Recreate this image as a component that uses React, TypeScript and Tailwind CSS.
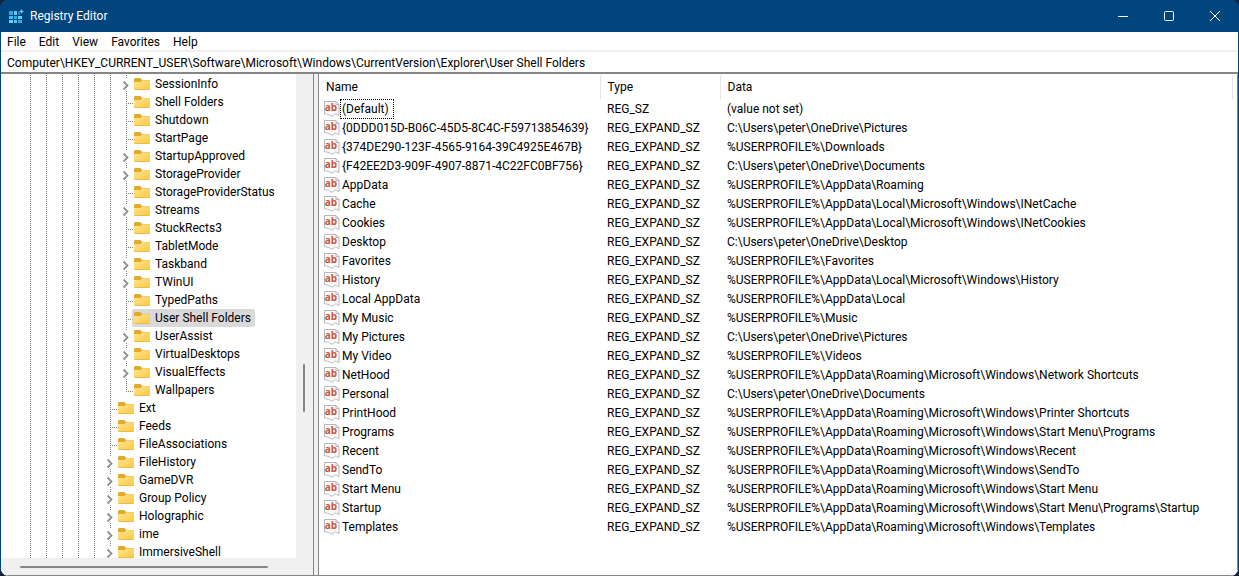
import React from 'react';

type Branch = 'closed' | 'leaf' | 'last';

interface TreeKey {
    name: string;
    depth: number;
    branch: Branch;
    selected?: boolean;
}

interface RegistryValue {
    name: string;
    data: string;
    type?: string;
    focused?: boolean;
}

const treeKeys: TreeKey[] = [
    { name: 'SessionInfo', depth: 6, branch: 'closed' },
    { name: 'Shell Folders', depth: 6, branch: 'leaf' },
    { name: 'Shutdown', depth: 6, branch: 'leaf' },
    { name: 'StartPage', depth: 6, branch: 'leaf' },
    { name: 'StartupApproved', depth: 6, branch: 'closed' },
    { name: 'StorageProvider', depth: 6, branch: 'closed' },
    { name: 'StorageProviderStatus', depth: 6, branch: 'leaf' },
    { name: 'Streams', depth: 6, branch: 'closed' },
    { name: 'StuckRects3', depth: 6, branch: 'leaf' },
    { name: 'TabletMode', depth: 6, branch: 'leaf' },
    { name: 'Taskband', depth: 6, branch: 'closed' },
    { name: 'TWinUI', depth: 6, branch: 'closed' },
    { name: 'TypedPaths', depth: 6, branch: 'leaf' },
    { name: 'User Shell Folders', depth: 6, branch: 'leaf', selected: true },
    { name: 'UserAssist', depth: 6, branch: 'closed' },
    { name: 'VirtualDesktops', depth: 6, branch: 'closed' },
    { name: 'VisualEffects', depth: 6, branch: 'closed' },
    { name: 'Wallpapers', depth: 6, branch: 'last' },
    { name: 'Ext', depth: 5, branch: 'leaf' },
    { name: 'Feeds', depth: 5, branch: 'leaf' },
    { name: 'FileAssociations', depth: 5, branch: 'leaf' },
    { name: 'FileHistory', depth: 5, branch: 'closed' },
    { name: 'GameDVR', depth: 5, branch: 'closed' },
    { name: 'Group Policy', depth: 5, branch: 'closed' },
    { name: 'Holographic', depth: 5, branch: 'closed' },
    { name: 'ime', depth: 5, branch: 'closed' },
    { name: 'ImmersiveShell', depth: 5, branch: 'closed' },
];

const values: RegistryValue[] = [
    { name: '(Default)', type: 'REG_SZ', data: '(value not set)', focused: true },
    { name: '{0DDD015D-B06C-45D5-8C4C-F59713854639}', data: 'C:\\Users\\peter\\OneDrive\\Pictures' },
    { name: '{374DE290-123F-4565-9164-39C4925E467B}', data: '%USERPROFILE%\\Downloads' },
    { name: '{F42EE2D3-909F-4907-8871-4C22FC0BF756}', data: 'C:\\Users\\peter\\OneDrive\\Documents' },
    { name: 'AppData', data: '%USERPROFILE%\\AppData\\Roaming' },
    { name: 'Cache', data: '%USERPROFILE%\\AppData\\Local\\Microsoft\\Windows\\INetCache' },
    { name: 'Cookies', data: '%USERPROFILE%\\AppData\\Local\\Microsoft\\Windows\\INetCookies' },
    { name: 'Desktop', data: 'C:\\Users\\peter\\OneDrive\\Desktop' },
    { name: 'Favorites', data: '%USERPROFILE%\\Favorites' },
    { name: 'History', data: '%USERPROFILE%\\AppData\\Local\\Microsoft\\Windows\\History' },
    { name: 'Local AppData', data: '%USERPROFILE%\\AppData\\Local' },
    { name: 'My Music', data: '%USERPROFILE%\\Music' },
    { name: 'My Pictures', data: 'C:\\Users\\peter\\OneDrive\\Pictures' },
    { name: 'My Video', data: '%USERPROFILE%\\Videos' },
    { name: 'NetHood', data: '%USERPROFILE%\\AppData\\Roaming\\Microsoft\\Windows\\Network Shortcuts' },
    { name: 'Personal', data: 'C:\\Users\\peter\\OneDrive\\Documents' },
    { name: 'PrintHood', data: '%USERPROFILE%\\AppData\\Roaming\\Microsoft\\Windows\\Printer Shortcuts' },
    { name: 'Programs', data: '%USERPROFILE%\\AppData\\Roaming\\Microsoft\\Windows\\Start Menu\\Programs' },
    { name: 'Recent', data: '%USERPROFILE%\\AppData\\Roaming\\Microsoft\\Windows\\Recent' },
    { name: 'SendTo', data: '%USERPROFILE%\\AppData\\Roaming\\Microsoft\\Windows\\SendTo' },
    { name: 'Start Menu', data: '%USERPROFILE%\\AppData\\Roaming\\Microsoft\\Windows\\Start Menu' },
    { name: 'Startup', data: '%USERPROFILE%\\AppData\\Roaming\\Microsoft\\Windows\\Start Menu\\Programs\\Startup' },
    { name: 'Templates', data: '%USERPROFILE%\\AppData\\Roaming\\Microsoft\\Windows\\Templates' },
];

const RegistryIcon = () => (
    <svg width="16" height="16" viewBox="0 0 16 16" aria-hidden="true">
        <path d="M1 3h4v4H1z" fill="#2fa8e0" />
        <path d="M6 3h3v4H6z" fill="#53cdf5" />
        <path d="M10 4h2v3h-2z" fill="#2386c0" />
        <path d="M1 8h4v3H1z" fill="#3fbdf0" />
        <path d="M6 8h3v3H6z" fill="#2fa8e0" />
        <path d="M10 8h4v3h-4z" fill="#58d4f8" />
        <path d="M1 12h4v3H1z" fill="#58d4f8" />
        <path d="M6 12h3v3H6z" fill="#4fc8f2" />
        <path d="M10 12h4v3h-4z" fill="#2fa8e0" />
        <path d="M13.500 1l.8 1.700 1.700.8-1.700.8-.8 1.700-.8-1.700-1.700-.8 1.700-.8z" fill="#5fd8fa" />
    </svg>
);

const FolderIcon = () => (
    <svg className="shrink-0" width="16" height="14" viewBox="0 0 16 14" aria-hidden="true">
        <defs>
            <linearGradient id="folder-front" x1="0" y1="0" x2="1" y2="1">
                <stop offset="0" stopColor="#ffe48f" />
                <stop offset="1" stopColor="#f9c941" />
            </linearGradient>
        </defs>
        <path d="M0 2.500C0 1.600.6 1 1.500 1h4.300c.5 0 .8.2 1.100.5L8.200 3H14.500c.9 0 1.500.6 1.500 1.500V7H0z" fill="#e0a92c" />
        <path d="M0 5h6.500L8.500 3.200h6c.9 0 1.500.5 1.500 1.300v7c0 .9-.6 1.500-1.500 1.500h-13C.6 13 0 12.400 0 11.500z" fill="url(#folder-front)" />
        <path d="M.5 12.500h15" stroke="#ecbc3f" />
    </svg>
);

// REG_SZ / REG_EXPAND_SZ marker: a torn sheet with "ab" on it
const StringIcon = () => (
    <svg className="shrink-0" width="16" height="17" viewBox="0 0 16 17" aria-hidden="true">
        <path
            d="M.5 1.500h11.500l3 3v11c-1.500 0-2-1.500-3.500-1.500s-2 2-3.500 2-2-1.500-3.500-1.500-2.500-1-4-.7z"
            fill="#fdfaf8"
            stroke="#b4b6ba"
        />
        <path d="M12 1.500v3h3" fill="none" stroke="#b4b6ba" />
        <text x="7" y="11" textAnchor="middle" fontSize="10" fontWeight="700" fontFamily="Open Sans, sans-serif" fill="#c9573a">ab</text>
    </svg>
);

const BranchMark = ({ branch }: { branch: Branch }) => (
    <svg className="shrink-0" width="16" height="18" viewBox="0 0 16 18" aria-hidden="true">
        {branch === 'closed' ? (
            <>
                <path d="M8.500 0v4M8.500 16v2" stroke="#7a7a7a" strokeDasharray="1 1" />
                <path d="M5.500 6.500l4 4-4 4" fill="none" stroke="#8f8f8f" strokeWidth="1.800" />
            </>
        ) : (
            <>
                <path d={branch === 'last' ? 'M8.500 0v11' : 'M8.500 0v18'} stroke="#7a7a7a" strokeDasharray="1 1" />
                <path d="M8 10.500h8" stroke="#7a7a7a" strokeDasharray="1 1" />
            </>
        )}
    </svg>
);

const TreeRow = ({ item }: { item: TreeKey }) => (
    <li role="treeitem" aria-selected={!!item.selected} className="flex h-[18px] pl-[21px]">
        {Array.from({ length: item.depth }).map((_, i) => (
            <span key={i} className="w-4 shrink-0 pl-2">
                <span className="block h-full w-px bg-[repeating-linear-gradient(#7a7a7a_0_1px,transparent_1px_2px)]" />
            </span>
        ))}
        <BranchMark branch={item.branch} />
        <button
            className={`-ml-0.5 flex items-center gap-[5px] rounded-xs pl-0.5 pr-1 leading-[14px] whitespace-nowrap ${item.selected ? 'bg-[#d9d9d9]' : ''}`}
        >
            <FolderIcon />
            {item.name}
        </button>
    </li>
);

const TitleBar = () => (
    <header className="flex h-8 shrink-0 items-center bg-[#00457e] pr-px pl-2 text-white">
        <RegistryIcon />
        <h1 className="flex-1 pl-1.5">Registry Editor</h1>
        <button aria-label="Minimize" className="flex h-8 w-[46px] items-center justify-center">
            <svg width="10" height="10" viewBox="0 0 10 10"><path d="M0 5.500h10" stroke="#fff" /></svg>
        </button>
        <button aria-label="Maximize" className="flex h-8 w-[46px] items-center justify-center">
            <svg width="10" height="10" viewBox="0 0 10 10"><rect x=".5" y=".5" width="9" height="9" rx="1" fill="none" stroke="#fff" /></svg>
        </button>
        <button aria-label="Close" className="flex h-8 w-[46px] items-center justify-center">
            <svg width="10" height="10" viewBox="0 0 10 10"><path d="M0 0l10 10M10 0L0 10" stroke="#fff" /></svg>
        </button>
    </header>
);

const KeyTree = () => (
    <nav aria-label="Registry keys" className="flex w-[313px] shrink-0 flex-col border-r border-[#858585] bg-[#f0f0f0]">
        <div className="flex min-h-0 flex-1">
            <ul role="tree" className="min-w-0 flex-1 overflow-hidden bg-white pt-px">
                {treeKeys.map(item => (
                    <TreeRow key={item.name} item={item} />
                ))}
            </ul>
            <div className="flex w-[17px] shrink-0 flex-col items-center pt-[290px] pr-px">
                <div className="h-12 w-0.5 rounded-full bg-[#868686]" />
            </div>
        </div>
        <div className="flex h-[17px] shrink-0 items-center pl-[19px]">
            <div className="h-0.5 w-[248px] rounded-full bg-[#868686]" />
        </div>
    </nav>
);

const ValueList = () => (
    <main className="min-w-0 flex-1 overflow-hidden border-x border-[#858585] bg-white pt-px pr-1">
        <table className="w-full table-fixed border-collapse text-left">
            <thead>
                <tr className="h-6">
                    <th className="w-[281px] border-r border-[#e5e5e5] p-0 pl-[7px] font-normal">Name</th>
                    <th className="w-[120px] border-r border-[#e5e5e5] p-0 pl-[7px] font-normal">Type</th>
                    <th className="border-r border-[#e5e5e5] p-0 pl-[7px] font-normal">Data</th>
                </tr>
            </thead>
            <tbody>
                {values.map(v => (
                    <tr key={v.name} className="h-[19px] whitespace-nowrap">
                        <td className="p-0 pl-[5px]">
                            <div className="flex h-[19px] items-center">
                                <StringIcon />
                                <span
                                    className={`border border-dotted pr-1 pl-px leading-[18px] ${v.focused ? 'border-black' : 'border-transparent'}`}
                                >
                                    {v.name}
                                </span>
                            </div>
                        </td>
                        <td className="p-0 pl-[7px]">{v.type ?? 'REG_EXPAND_SZ'}</td>
                        <td className="p-0 pl-[7px]">{v.data}</td>
                    </tr>
                ))}
            </tbody>
        </table>
    </main>
);

export default function App() {
    return (
        <div className="h-screen bg-[#1b2236]">
            <div className="flex h-full flex-col overflow-hidden rounded-lg bg-[#00457e] font-['Roboto','Open_Sans',sans-serif] text-[12px] leading-[18px] text-black">
                <TitleBar />
                <div className="mx-px flex min-h-0 flex-1 flex-col overflow-hidden rounded-b-lg bg-white">
                    <div role="menubar" className="flex h-[18px] shrink-0 items-center gap-[13px] pt-0.5 pl-1.5">
                        {['File', 'Edit', 'View', 'Favorites', 'Help'].map(label => (
                            <button key={label} role="menuitem">{label}</button>
                        ))}
                    </div>
                    <input
                        aria-label="Address"
                        className="h-[22px] shrink-0 border-t-2 border-[#f0f0f0] px-1.5 pt-0.5 outline-none"
                        defaultValue="Computer\HKEY_CURRENT_USER\Software\Microsoft\Windows\CurrentVersion\Explorer\User Shell Folders"
                    />
                    <div className="flex min-h-0 flex-1 gap-1 border-y border-t-2 border-[#858585] bg-[#f0f0f0]">
                        <KeyTree />
                        <ValueList />
                    </div>
                </div>
            </div>
        </div>
    );
}
